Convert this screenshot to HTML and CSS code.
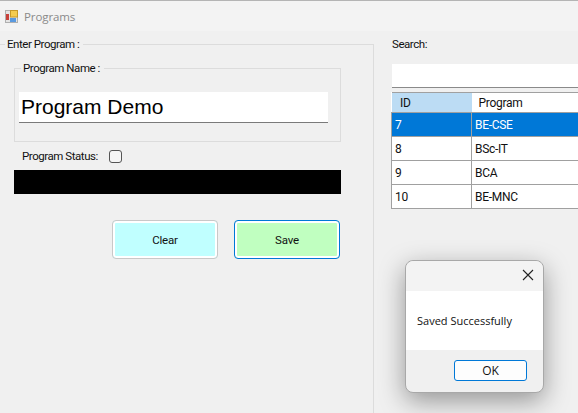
FILE: index.html
```html
<!DOCTYPE html>
<html lang="en">
<head>
  <meta charset="UTF-8">
  <title>Programs</title>
  <link rel="stylesheet" href="styles.css">
</head>
<body>
  <div class="titlebar">
    <svg class="app-icon" width="13" height="13" viewBox="0 0 13 13">
      <rect x="0.5" y="0.5" width="12" height="12" fill="#e4e4e4" stroke="#b0b0b0"/>
      <rect x="5.5" y="0.5" width="7" height="6.5" fill="#f4cc50" stroke="#c89a28"/>
      <rect x="1" y="4" width="3" height="6" fill="#c8403a"/>
      <rect x="5" y="8" width="6" height="4" fill="#5a9ae0"/>
    </svg>
    <span class="title-text">Programs</span>
  </div>

  <div class="content">
    <div class="left-panel">
      <fieldset class="outer-group">
        <legend>Enter Program :</legend>
        <fieldset class="name-group">
          <legend>Program Name :</legend>
          <input class="name-input" type="text" value="Program Demo">
        </fieldset>
        <div class="status-row">
          <label>Program Status:</label>
          <span class="check"></span>
        </div>
        <div class="black-bar"></div>
        <div class="button-row">
          <button class="btn btn-clear">Clear</button>
          <button class="btn btn-save">Save</button>
        </div>
      </fieldset>
    </div>

    <div class="right-panel">
      <label class="search-label">Search:</label>
      <input class="search-input" type="text">
      <table class="grid">
        <tr class="head"><th class="col-id">ID</th><th class="col-name">Program</th></tr>
        <tr class="selected"><td>7</td><td>BE-CSE</td></tr>
        <tr><td>8</td><td>BSc-IT</td></tr>
        <tr><td>9</td><td>BCA</td></tr>
        <tr><td>10</td><td>BE-MNC</td></tr>
      </table>
    </div>
  </div>

  <!-- Message box -->
  <div class="dialog">
    <div class="dialog-head">
      <svg width="12" height="12" viewBox="0 0 12 12"><path d="M1 1 L11 11 M11 1 L1 11" stroke="#222" stroke-width="1.1" fill="none"/></svg>
    </div>
    <div class="dialog-body">Saved Successfully</div>
    <div class="dialog-foot"><button class="ok-btn">OK</button></div>
  </div>
</body>
</html>
```

FILE: styles.css
```css
* {
  box-sizing: border-box;
}
html, body {
  height: 100%;
}
body {
  margin: 0;
  overflow: hidden;
  background: #f0f0f0;
  font-family: Roboto, sans-serif;
  font-size: 11.5px;
  letter-spacing: -0.45px;
  color: #111;
}
.titlebar {
  display: flex;
  align-items: center;
  height: 31px;
  padding: 1px 0 0 5px;
  background: #f3f3f3;
  border-top: 1px solid #b4b4b4;
}
.app-icon {
  margin-right: 6px;
}
.title-text {
  font-family: "Open Sans", sans-serif;
  font-size: 11.5px;
  letter-spacing: -0.1px;
  color: #8a8a8a;
}
.content {
  display: flex;
  height: 382px;
}
.left-panel {
  width: 374px;
  flex: none;
}
legend {
  padding: 0 4px 0 2px;
  line-height: 16px;
}
.outer-group {
  height: 100%;
  margin: 5px 0 0;
  padding: 8px 32px 0 14px;
  border: 0;
  border-top: 1px solid #dcdcdc;
  border-right: 1px solid #dcdcdc;
}
.outer-group > legend {
  margin-left: -9px;
}
.name-group {
  height: 82px;
  margin: 0;
  padding: 16px 12px 0 4px;
  border: 1px solid #dcdcdc;
}
.name-group > legend {
  margin-left: 2px;
}
.name-input {
  display: block;
  width: 100%;
  height: 31px;
  padding: 0 2px;
  border: 0;
  border-bottom: 1px solid #7a7a7a;
  background: #fff;
  font-family: "Liberation Sans", sans-serif;
  font-size: 21px;
  letter-spacing: 0;
  color: #000;
  outline: none;
}
.status-row {
  display: flex;
  align-items: center;
  height: 28px;
  padding-left: 8px;
}
.check {
  width: 13px;
  height: 13px;
  margin-left: 11px;
  background: #f6f6f6;
  border: 1px solid #555;
  border-radius: 3px;
}
.black-bar {
  height: 24px;
  background: #000;
}
.button-row {
  display: flex;
  justify-content: flex-end;
  gap: 16px;
  margin-top: 26px;
  padding-right: 1px;
}
.btn {
  width: 106px;
  height: 39px;
  padding: 0;
  border-radius: 4px;
  border: 1px solid #c8c8c8;
  box-shadow: inset 0 0 0 2px #fff;
  font-family: Roboto, sans-serif;
  font-size: 11.5px;
  letter-spacing: -0.2px;
  color: #111;
}
.btn-clear {
  background: #c0ffff;
}
.btn-save {
  background: #c0ffc0;
  border-color: #0078d7;
}
.right-panel {
  flex: 1;
  display: flex;
  flex-direction: column;
  align-items: flex-start;
  padding: 5px 0 0 18px;
  overflow: hidden;
}
.search-label {
  line-height: 16px;
}
.search-input {
  flex: none;
  width: 186px;
  height: 24px;
  margin-top: 12px;
  border: 0;
  border-bottom: 1px solid #8a8a8a;
  background: #fff;
}
.grid {
  flex: none;
  width: 240px;
  margin: 4px 0 0 -1px;
  border-collapse: collapse;
  table-layout: fixed;
  border-top: 1px solid #a0a0a0;
  border-left: 1px solid #a0a0a0;
  background: #fff;
  font-size: 12px;
  letter-spacing: -0.3px;
}
.grid th {
  height: 20px;
  padding: 0 0 0 7px;
  font-weight: normal;
  text-align: left;
  background: #fff;
  border-bottom: 1px solid #a0a0a0;
}
.grid th.col-id {
  width: 80px;
  padding-left: 8px;
  background: #bcdcf4;
  border-left: 1px solid #fff;
}
.grid td {
  height: 24px;
  padding: 0 0 0 3px;
  border-right: 1px solid #a0a0a0;
  border-bottom: 1px solid #a0a0a0;
  color: #111;
}
.grid .selected td {
  background: #0078d7;
  color: #fff;
}
.dialog {
  position: absolute;
  left: 405px;
  top: 260px;
  width: 139px;
  height: 133px;
  display: flex;
  flex-direction: column;
  background: #f0f0f0;
  border: 1px solid #a8a8a8;
  border-radius: 8px;
  box-shadow: 0 8px 26px rgba(0, 0, 0, 0.38);
  font-family: "Open Sans", sans-serif;
  font-size: 11px;
  letter-spacing: 0;
}
.dialog-head {
  display: flex;
  justify-content: flex-end;
  align-items: center;
  height: 30px;
  padding: 0 9px 2px 0;
  background: #f3f3f3;
  border-radius: 8px 8px 0 0;
}
.dialog-body {
  display: flex;
  align-items: center;
  height: 59px;
  padding-left: 11px;
  background: #fff;
}
.dialog-foot {
  flex: 1;
  display: flex;
  justify-content: flex-end;
  padding: 10px 16px 0 0;
}
.ok-btn {
  width: 73px;
  height: 21px;
  padding: 0;
  background: #fdfdfd;
  border: 1px solid #0078d7;
  border-radius: 3px;
  font-family: "Open Sans", sans-serif;
  font-size: 12px;
  color: #111;
}
```
